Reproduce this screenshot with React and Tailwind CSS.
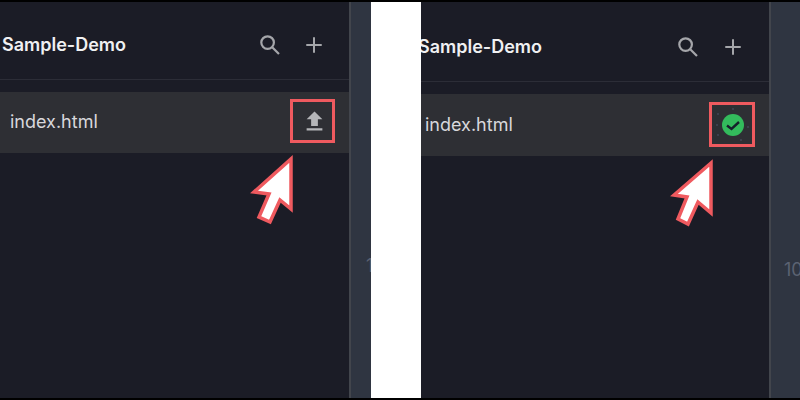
import React from "react";
import { Plus } from "lucide-react";

const Cursor = ({ points, className }) => (
  <svg className={className} width="50" height="70" viewBox="0 0 50 70" fill="none">
    <polygon
      points={points}
      fill="#ffffff"
      stroke="#ef5a5f"
      strokeWidth="3.5"
      strokeLinejoin="miter"
    />
  </svg>
);

const SearchIcon = ({ className }) => (
  <svg className={className} width="20" height="20" viewBox="0 0 20 20" fill="none" stroke="#a5a6aa" strokeWidth="2.2">
    <circle cx="7.6" cy="7.6" r="6.3" />
    <path d="M12.2 12.2l6.8 6.8" />
  </svg>
);

const UploadIcon = () => (
  <svg width="27" height="27" viewBox="0 0 24 24" fill="#b4b5b8">
    <path d="M9 16h6v-6h4l-7-7-7 7h4zm-4 2h14v2H5z" />
  </svg>
);

const SavedIcon = () => (
  <svg width="36" height="36" viewBox="0 0 36 36" fill="none">
    <circle cx="18" cy="18" r="11" fill="#33bb5c" />
    <path d="M12 18.5l4.5 3.5 7.5-7" stroke="#15202b" strokeWidth="2.4" />
    <g fill="#59607a">
      <circle cx="3" cy="7" r="0.7" />
      <circle cx="2" cy="18" r="0.7" />
      <circle cx="3" cy="28" r="0.7" />
      <circle cx="18" cy="2" r="0.7" />
      <circle cx="33" cy="20" r="0.7" />
      <circle cx="26" cy="33" r="0.7" />
    </g>
  </svg>
);

const App = () => {
  return (
    <div
      className="relative w-[800px] h-[400px] overflow-hidden flex py-[2px] pr-[2px] bg-black text-white"
      style={{ fontFamily: "Inter, 'Liberation Sans', sans-serif" }}
    >
      {/* left shot */}
      <div className="w-[371px] flex shrink-0">
        <div className="w-[349px] bg-[#1b1c26] flex flex-col">
          <div className="h-[78px] pt-[8px] border-b border-[#2c2d37] flex items-center pl-[2px] pr-[23px]">
            <span className="text-[18px] font-semibold text-[#f0f0f2]">Sample-Demo</span>
            <SearchIcon className="ml-auto mr-[22px]" />
            <Plus size={24} strokeWidth={2} className="text-[#a5a6aa]" />
          </div>
          <div className="mt-[12px] h-[61px] pb-[2px] bg-[#2e2f34] flex items-center pl-[10px] pr-[21px]">
            <span className="text-[18px] text-[#d8d8dc]">index.html</span>
            <span className="ml-auto flex"><UploadIcon /></span>
          </div>
        </div>
        <div className="w-[22px] bg-[#2f3541] border-l-2 border-[#42454c] pt-[250px] pl-[15px] overflow-hidden">
          <span className="text-[18px] text-[#5b6272]">1</span>
        </div>
      </div>

      <div className="w-[50px] bg-white shrink-0" />

      {/* right shot */}
      <div className="flex-1 flex">
        <div className="w-[348px] bg-[#1b1c26] flex flex-col">
          <div className="h-[80px] pt-[10px] border-b border-[#2c2d37] flex items-center pr-[24px] overflow-hidden">
            <span className="text-[18px] font-semibold text-[#f0f0f2] -ml-[3px]">Sample-Demo</span>
            <SearchIcon className="ml-auto mr-[23px]" />
            <Plus size={24} strokeWidth={2} className="text-[#a5a6aa]" />
          </div>
          <div className="mt-[12px] h-[62px] bg-[#2e2f34] flex items-center pl-[4px] pr-[18px]">
            <span className="text-[18px] text-[#d8d8dc] -mt-[2px]">index.html</span>
            <span className="ml-auto flex"><SavedIcon /></span>
          </div>
        </div>
        <div className="flex-1 bg-[#2f3541] border-l-2 border-[#42454c] pt-[254px] pl-[13px] overflow-hidden">
          <span className="text-[18px] text-[#5b6272]">10</span>
        </div>
      </div>

      {/* annotations */}
      <div className="absolute left-[290px] top-[99px] w-[45px] h-[44px] border-[3px] border-[#ef5a5f]" />
      <div className="absolute left-[709px] top-[102px] w-[46px] h-[45px] border-[3px] border-[#ef5a5f]" />
      <Cursor
        className="absolute left-[250px] top-[155px]"
        points="41,4 41,54 30,45 20,67 9,62 19,39 4,37"
      />
      <Cursor
        className="absolute left-[670px] top-[159px]"
        points="41,4 41,54 28,43 18,65 8,60 17,38 4,36"
      />
    </div>
  );
};

export default App;
